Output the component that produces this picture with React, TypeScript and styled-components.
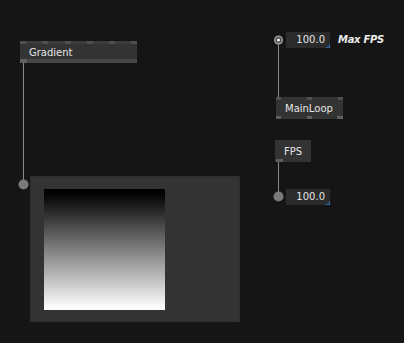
import React from "react";
import styled, { createGlobalStyle } from "styled-components";

const Global = createGlobalStyle`
  html, body { margin: 0; padding: 0; background: #151515; }
  body { font-family: "DejaVu Sans", sans-serif; }
`;

const Canvas = styled.div`
  position: relative;
  width: 404px;
  height: 343px;
  overflow: hidden;
  background: #151515;
`;

const Wires = styled.svg`
  position: absolute;
  left: 0;
  top: 0;
  pointer-events: none;
`;

const Op = styled.div<{ $x: number; $y: number; $w: number }>`
  position: absolute;
  left: ${(p) => p.$x}px;
  top: ${(p) => p.$y}px;
  width: ${(p) => p.$w}px;
  height: 22px;
  box-sizing: border-box;
  display: flex;
  align-items: center;
  padding: 1px 0 0 9px;
  background: #333333;
  color: #e6e6e6;
  font-size: 10px;
  white-space: nowrap;
`;

const PortStrip = styled.div<{ $side: "top" | "bottom"; $h: number; $bg: string }>`
  position: absolute;
  left: 0;
  right: 0;
  ${(p) => p.$side}: 0;
  height: ${(p) => p.$h}px;
  background: ${(p) => p.$bg};
`;

const Port = styled.div<{ $x: number; $w: number; $bg: string }>`
  position: absolute;
  top: 0;
  bottom: 0;
  left: ${(p) => p.$x}px;
  width: ${(p) => p.$w}px;
  background: ${(p) => p.$bg};
`;

const Label = styled.span`
  position: relative;
`;

const ValueRow = styled.div<{ $x: number; $y: number }>`
  position: absolute;
  left: ${(p) => p.$x}px;
  top: ${(p) => p.$y}px;
  display: flex;
  align-items: center;
  gap: 8px;
`;

const NumBox = styled.div`
  position: relative;
  width: 44px;
  height: 16px;
  box-sizing: border-box;
  padding-right: 5px;
  background: #2b2b2b;
  color: #e4e4e4;
  font-size: 10px;
  line-height: 16px;
  text-align: right;
  &::after {
    content: "";
    position: absolute;
    right: 0;
    bottom: 0;
    width: 3px;
    height: 3px;
    border-right: 1px solid #2f6fa8;
    border-bottom: 1px solid #2f6fa8;
  }
`;

const Comment = styled.div`
  color: #ececec;
  font-size: 10px;
  font-style: italic;
  font-weight: bold;
  line-height: 16px;
  letter-spacing: -0.3px;
`;

const Preview = styled.div`
  position: absolute;
  left: 30px;
  top: 176px;
  width: 210px;
  height: 146px;
  box-sizing: border-box;
  display: flex;
  align-items: flex-start;
  padding: 12px 0 0 13px;
  background: #333333;
  border: 1px solid #2e2e2e;
`;

const GradientImage = styled.div`
  width: 121px;
  height: 121px;
  background: linear-gradient(to bottom, #000 0%, #040404 5%, #7f7f7f 50%, #fafafa 97%, #fff 100%);
`;

type P = { x: number; w: number };

function OpNode(props: {
  x: number;
  y: number;
  w: number;
  name: string;
  top?: P[];
  bottom?: P[];
  topBg?: string;
  bottomBg?: string;
  bottomH?: number;
}) {
  return (
    <Op $x={props.x} $y={props.y} $w={props.w}>
      {props.top && (
        <PortStrip $side="top" $h={3} $bg={props.topBg ?? "transparent"}>
          {props.top.map((p, i) => (
            <Port key={i} $x={p.x} $w={p.w} $bg="#505050" />
          ))}
        </PortStrip>
      )}
      {props.bottom && (
        <PortStrip $side="bottom" $h={props.bottomH ?? 3} $bg={props.bottomBg ?? "transparent"}>
          {props.bottom.map((p, i) => (
            <Port key={i} $x={p.x} $w={p.w} $bg="#5e5e5e" />
          ))}
        </PortStrip>
      )}
      <Label>{props.name}</Label>
    </Op>
  );
}

export default function App() {
  return (
    <>
      <Global />
      <Canvas>
        <Wires width={404} height={343}>
          <line x1={23.5} y1={63} x2={23.5} y2={184} stroke="#8a8a8a" strokeWidth={1} />
          <circle cx={23.5} cy={184.5} r={5} fill="#7a7a7a" />
          <line x1={278.5} y1={44} x2={278.5} y2={97} stroke="#8a8a8a" strokeWidth={1} />
          <line x1={278.5} y1={162} x2={278.5} y2={196} stroke="#8a8a8a" strokeWidth={1} />
          <circle cx={278.5} cy={196.5} r={5} fill="#7a7a7a" />
          <circle cx={278.5} cy={40} r={4.5} fill="#a0a0a0" />
          <circle cx={278.5} cy={40} r={3} fill="#4a4a4a" />
          <circle cx={278.5} cy={40} r={1.6} fill="#f0f0f0" />
        </Wires>

        <OpNode
          x={20}
          y={41}
          w={117}
          name="Gradient"
          topBg="#3b3b3b"
          top={[
            { x: 0, w: 6 },
            { x: 22, w: 6 },
            { x: 45, w: 6 },
            { x: 67, w: 6 },
            { x: 89, w: 6 },
            { x: 111, w: 6 },
          ]}
          bottomBg="#474747"
          bottomH={4}
          bottom={[{ x: 0, w: 7 }]}
        />

        <ValueRow $x={286} $y={32}>
          <NumBox>100.0</NumBox>
          <Comment>Max FPS</Comment>
        </ValueRow>

        <OpNode
          x={276}
          y={97}
          w={67}
          name="MainLoop"
          top={[
            { x: 0, w: 5 },
            { x: 31, w: 5 },
            { x: 62, w: 5 },
          ]}
          bottom={[
            { x: 0, w: 5 },
            { x: 31, w: 5 },
            { x: 61, w: 6 },
          ]}
        />

        <OpNode x={275} y={140} w={36} name="FPS" bottom={[{ x: 1, w: 7 }]} />

        <ValueRow $x={286} $y={189}>
          <NumBox>100.0</NumBox>
        </ValueRow>

        <Preview>
          <GradientImage />
        </Preview>
      </Canvas>
    </>
  );
}
